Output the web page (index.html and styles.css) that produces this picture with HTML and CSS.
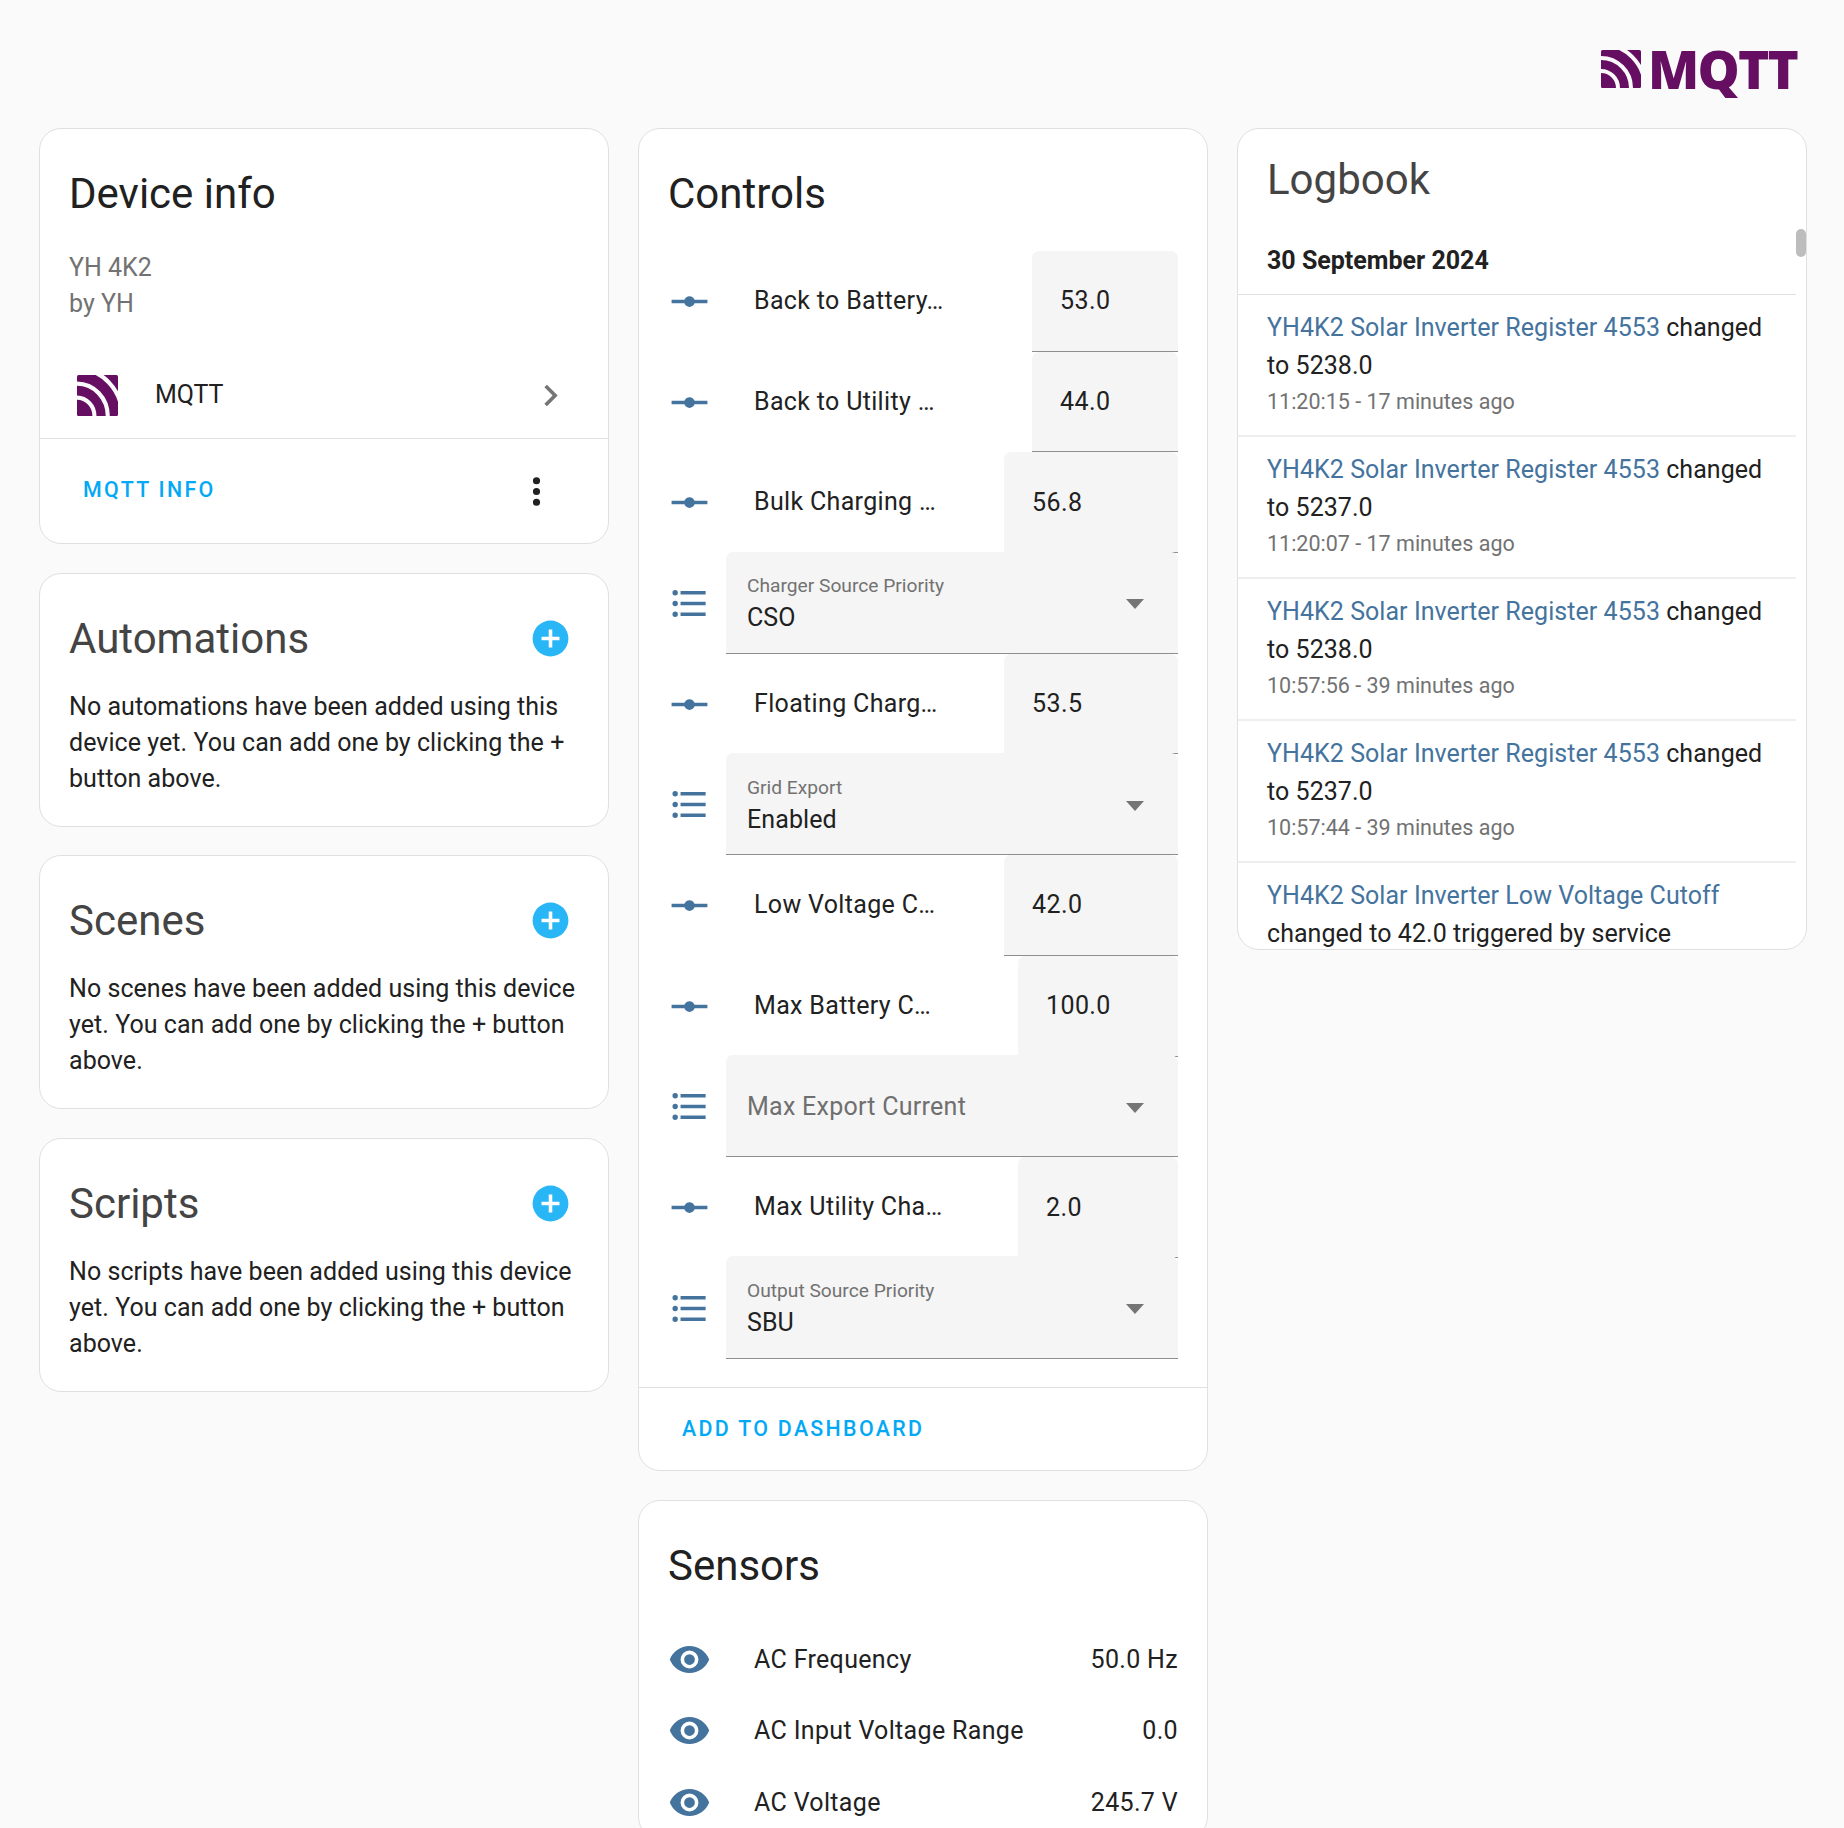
FILE: index.html
```html
<!DOCTYPE html>
<html>
<head>
  <meta charset="UTF-8">
  <title>YH 4K2</title>
  <link rel="stylesheet" href="styles.css">
</head>
<body>
  <svg class="defs" width="0" height="0">
    <symbol id="i-mqtt" viewBox="0 0 40 38" preserveAspectRatio="none">
      <rect width="40" height="38" rx="1.5" fill="#660f62"/>
      <g fill="none" stroke="#fafafa" stroke-width="4">
        <circle cx="0" cy="38" r="17"/>
        <circle cx="0" cy="38" r="30"/>
        <circle cx="0" cy="38" r="44"/>
      </g>
    </symbol>
    <symbol id="i-slider" viewBox="0 0 24 24"><path d="M2 11H9.17C9.58 9.83 10.69 9 12 9S14.42 9.83 14.83 11H22V13H14.83C14.42 14.17 13.31 15 12 15S9.58 14.17 9.17 13H2V11Z"/></symbol>
    <symbol id="i-list" viewBox="0 0 24 24"><path d="M7,5H21V7H7V5M7,13V11H21V13H7M4,4.5A1.5,1.5 0 0,1 5.5,6A1.5,1.5 0 0,1 4,7.5A1.5,1.5 0 0,1 2.5,6A1.5,1.5 0 0,1 4,4.5M4,10.5A1.5,1.5 0 0,1 5.5,12A1.5,1.5 0 0,1 4,13.5A1.5,1.5 0 0,1 2.5,12A1.5,1.5 0 0,1 4,10.5M7,19V17H21V19H7M4,16.5A1.5,1.5 0 0,1 5.5,18A1.5,1.5 0 0,1 4,19.5A1.5,1.5 0 0,1 2.5,18A1.5,1.5 0 0,1 4,16.5Z"/></symbol>
    <symbol id="i-eye" viewBox="0 0 24 24"><path d="M12,9A3,3 0 0,0 9,12A3,3 0 0,0 12,15A3,3 0 0,0 15,12A3,3 0 0,0 12,9M12,17A5,5 0 0,1 7,12A5,5 0 0,1 12,7A5,5 0 0,1 17,12A5,5 0 0,1 12,17M12,4.5C7,4.5 2.73,7.61 1,12C2.73,16.39 7,19.5 12,19.5C17,19.5 21.27,16.39 23,12C21.27,7.61 17,4.5 12,4.5Z"/></symbol>
    <symbol id="i-plus" viewBox="0 0 24 24"><path d="M17,13H13V17H11V13H7V11H11V7H13V11H17M12,2A10,10 0 0,0 2,12A10,10 0 0,0 12,22A10,10 0 0,0 22,12A10,10 0 0,0 12,2Z"/></symbol>
  </svg>

  <header class="topbar">
    <svg class="logo-icon"><use href="#i-mqtt"/></svg>
    <span class="logo-text">MQTT</span>
  </header>

  <main class="columns">
    <section class="column">
      <div class="card">
        <h2 class="card-title">Device info</h2>
        <div class="device-meta">YH 4K2<br>by YH</div>
        <div class="integration">
          <svg class="integration-icon"><use href="#i-mqtt"/></svg>
          <span class="integration-name">MQTT</span>
          <svg class="chevron" viewBox="0 0 24 24"><path d="M8.59,16.58L13.17,12L8.59,7.41L10,6L16,12L10,18L8.59,16.58Z"/></svg>
        </div>
        <div class="device-actions">
          <a class="action-link">MQTT INFO</a>
          <svg class="dots" viewBox="0 0 24 24"><path d="M12,16A2,2 0 0,1 14,18A2,2 0 0,1 12,20A2,2 0 0,1 10,18A2,2 0 0,1 12,16M12,10A2,2 0 0,1 14,12A2,2 0 0,1 12,14A2,2 0 0,1 10,12A2,2 0 0,1 12,10M12,4A2,2 0 0,1 14,6A2,2 0 0,1 12,8A2,2 0 0,1 10,6A2,2 0 0,1 12,4Z"/></svg>
        </div>
      </div>

      <div class="card">
        <div class="card-head">
          <h2 class="card-title muted">Automations</h2>
          <svg class="add-icon"><use href="#i-plus"/></svg>
        </div>
        <p class="empty-text">No automations have been added using this device yet. You can add one by clicking the + button above.</p>
      </div>

      <div class="card">
        <div class="card-head">
          <h2 class="card-title muted">Scenes</h2>
          <svg class="add-icon"><use href="#i-plus"/></svg>
        </div>
        <p class="empty-text">No scenes have been added using this device yet. You can add one by clicking the + button above.</p>
      </div>

      <div class="card">
        <div class="card-head">
          <h2 class="card-title muted">Scripts</h2>
          <svg class="add-icon"><use href="#i-plus"/></svg>
        </div>
        <p class="empty-text">No scripts have been added using this device yet. You can add one by clicking the + button above.</p>
      </div>
    </section>

    <section class="column">
      <div class="card">
        <h2 class="card-title">Controls</h2>
        <div class="controls">
          <div class="control">
            <svg class="entity-icon"><use href="#i-slider"/></svg>
            <span class="control-label">Back to Battery…</span>
            <div class="field field-s">53.0</div>
          </div>
          <div class="control">
            <svg class="entity-icon"><use href="#i-slider"/></svg>
            <span class="control-label">Back to Utility …</span>
            <div class="field field-s">44.0</div>
          </div>
          <div class="control">
            <svg class="entity-icon"><use href="#i-slider"/></svg>
            <span class="control-label">Bulk Charging …</span>
            <div class="field field-l">56.8</div>
          </div>
          <div class="control">
            <svg class="entity-icon"><use href="#i-list"/></svg>
            <div class="select">
              <div class="select-text">
                <span class="select-label">Charger Source Priority</span>
                <span class="select-value">CSO</span>
              </div>
              <span class="arrow"></span>
            </div>
          </div>
          <div class="control">
            <svg class="entity-icon"><use href="#i-slider"/></svg>
            <span class="control-label">Floating Charg…</span>
            <div class="field field-l">53.5</div>
          </div>
          <div class="control">
            <svg class="entity-icon"><use href="#i-list"/></svg>
            <div class="select">
              <div class="select-text">
                <span class="select-label">Grid Export</span>
                <span class="select-value">Enabled</span>
              </div>
              <span class="arrow"></span>
            </div>
          </div>
          <div class="control">
            <svg class="entity-icon"><use href="#i-slider"/></svg>
            <span class="control-label">Low Voltage C…</span>
            <div class="field field-l">42.0</div>
          </div>
          <div class="control">
            <svg class="entity-icon"><use href="#i-slider"/></svg>
            <span class="control-label">Max Battery C…</span>
            <div class="field field-m">100.0</div>
          </div>
          <div class="control">
            <svg class="entity-icon"><use href="#i-list"/></svg>
            <div class="select">
              <div class="select-text">
                <span class="select-placeholder">Max Export Current</span>
              </div>
              <span class="arrow"></span>
            </div>
          </div>
          <div class="control">
            <svg class="entity-icon"><use href="#i-slider"/></svg>
            <span class="control-label">Max Utility Cha…</span>
            <div class="field field-m">2.0</div>
          </div>
          <div class="control">
            <svg class="entity-icon"><use href="#i-list"/></svg>
            <div class="select">
              <div class="select-text">
                <span class="select-label">Output Source Priority</span>
                <span class="select-value">SBU</span>
              </div>
              <span class="arrow"></span>
            </div>
          </div>
        </div>
        <div class="card-actions">
          <a class="action-link">ADD TO DASHBOARD</a>
        </div>
      </div>

      <div class="card">
        <h2 class="card-title">Sensors</h2>
        <div class="sensors">
          <div class="sensor">
            <svg class="entity-icon"><use href="#i-eye"/></svg>
            <span class="sensor-name">AC Frequency</span>
            <span>50.0 Hz</span>
          </div>
          <div class="sensor">
            <svg class="entity-icon"><use href="#i-eye"/></svg>
            <span class="sensor-name">AC Input Voltage Range</span>
            <span>0.0</span>
          </div>
          <div class="sensor">
            <svg class="entity-icon"><use href="#i-eye"/></svg>
            <span class="sensor-name">AC Voltage</span>
            <span>245.7 V</span>
          </div>
        </div>
      </div>
    </section>

    <section class="column">
      <div class="card logbook">
        <h2 class="card-title muted">Logbook</h2>
        <div class="log-date">30 September 2024</div>
        <div class="log-entry">
          <p class="log-text"><a class="log-link">YH4K2 Solar Inverter Register 4553</a> changed to 5238.0</p>
          <div class="log-time">11:20:15 - 17 minutes ago</div>
        </div>
        <div class="log-entry">
          <p class="log-text"><a class="log-link">YH4K2 Solar Inverter Register 4553</a> changed to 5237.0</p>
          <div class="log-time">11:20:07 - 17 minutes ago</div>
        </div>
        <div class="log-entry">
          <p class="log-text"><a class="log-link">YH4K2 Solar Inverter Register 4553</a> changed to 5238.0</p>
          <div class="log-time">10:57:56 - 39 minutes ago</div>
        </div>
        <div class="log-entry">
          <p class="log-text"><a class="log-link">YH4K2 Solar Inverter Register 4553</a> changed to 5237.0</p>
          <div class="log-time">10:57:44 - 39 minutes ago</div>
        </div>
        <div class="log-entry">
          <p class="log-text"><a class="log-link">YH4K2 Solar Inverter Low Voltage Cutoff</a> changed to 42.0 triggered by service</p>
        </div>
        <div class="log-thumb"></div>
      </div>
    </section>
  </main>
</body>
</html>
```

FILE: styles.css
```css
html, body {
  height: 1828px;
  overflow: hidden;
}

body {
  margin: 0;
  background-color: #fafafa;
  color: #212121;
  font-family: Roboto, "Liberation Sans", sans-serif;
  font-size: 25px;
}

.defs {
  position: absolute;
}

.topbar {
  height: 128px;
  padding: 50px 47px 0 0;
  box-sizing: border-box;
  display: flex;
  justify-content: flex-end;
  align-items: flex-start;
  gap: 7px;
}

.logo-icon {
  width: 40px;
  height: 38px;
}

.logo-text {
  font-family: "Open Sans", sans-serif;
  font-weight: 800;
  font-size: 53px;
  line-height: 38px;
  letter-spacing: -1.8px;
  color: #660f62;
}

.columns {
  display: flex;
  gap: 29px;
  padding-left: 39px;
  align-items: flex-start;
}

.column {
  width: 570px;
  display: flex;
  flex-direction: column;
  gap: 28.5px;
}

.card {
  background-color: #fff;
  border: 1px solid #e0e0e0;
  border-radius: 22px;
  overflow: hidden;
}

.card-title {
  margin: 0;
  padding: 36px 29px 0;
  font-size: 42px;
  line-height: 58px;
  font-weight: 400;
}

.muted {
  color: #444;
}

.card-head {
  display: flex;
  justify-content: space-between;
  align-items: flex-end;
  padding-right: 36px;
}

.add-icon {
  width: 43px;
  height: 43px;
  margin-bottom: 8px;
  fill: #29b6f6;
}

.empty-text {
  margin: 0;
  padding: 21px 29px 29px;
  line-height: 36px;
  letter-spacing: 0.05px;
}

.device-meta {
  padding: 27px 29px 28px;
  line-height: 36px;
  color: #727272;
}

.integration {
  height: 88px;
  display: flex;
  align-items: center;
  padding: 0 36px 0 37px;
  border-bottom: 1px solid #e0e0e0;
}

.integration-icon {
  width: 41px;
  height: 41px;
  margin-top: 3px;
}

.integration-name {
  margin-left: 37px;
  flex: 1;
}

.chevron {
  width: 43px;
  height: 43px;
  margin-top: 2px;
  fill: #757575;
}

.device-actions {
  height: 104px;
  display: flex;
  align-items: center;
  justify-content: space-between;
  padding: 0 50px 4px 43px;
  box-sizing: border-box;
}

.action-link {
  color: #03a9f4;
  font-size: 21.4px;
  font-weight: 500;
  letter-spacing: 2.3px;
}

.dots {
  width: 43px;
  height: 43px;
  margin-top: 4px;
  fill: #212121;
}

.controls {
  padding: 28px 29px 28px 29px;
}

.control {
  height: 100.7px;
  display: flex;
  align-items: center;
}

.entity-icon {
  width: 43px;
  height: 43px;
  flex: none;
  fill: #44739e;
}

.control-label {
  flex: 1;
  margin-left: 43px;
  padding-bottom: 2px;
  white-space: nowrap;
  letter-spacing: 0.33px;
}

.field {
  height: 100%;
  box-sizing: border-box;
  display: flex;
  align-items: center;
  padding-left: 28px;
  background-color: #f5f5f5;
  border-bottom: 1px solid #8e8e8e;
  border-radius: 7px 7px 0 0;
  letter-spacing: 0.4px;
}

.field-s {
  width: 146px;
}

.field-m {
  width: 160px;
}

.field-l {
  width: 174px;
}

/* select sits over the underline of the row above, only the corner shows it */
.select {
  flex: 1;
  align-self: flex-end;
  height: calc(100% + 1.5px);
  margin-left: 15px;
  box-sizing: border-box;
  display: flex;
  align-items: center;
  justify-content: space-between;
  padding: 2px 33px 0 21px;
  background-color: #f5f5f5;
  border-bottom: 1px solid #8e8e8e;
  border-radius: 7px 7px 0 0;
}

.select-text {
  display: flex;
  flex-direction: column;
}

.select-label {
  font-size: 19.2px;
  line-height: 30px;
  color: #727272;
}

.select-value {
  line-height: 34px;
  letter-spacing: 0.1px;
}

.select-placeholder {
  color: #6f6f6f;
  letter-spacing: 0.26px;
}

.arrow {
  width: 0;
  height: 0;
  margin-top: 2px;
  margin-right: 1px;
  border-left: 9px solid transparent;
  border-right: 9px solid transparent;
  border-top: 10px solid #757575;
}

.card-actions {
  height: 82.5px;
  padding-left: 43px;
  display: flex;
  align-items: center;
  border-top: 1px solid #e0e0e0;
}

.sensors {
  padding: 29px 29px 0 29px;
  letter-spacing: 0.33px;
}

.sensor {
  height: 71.6px;
  display: flex;
  align-items: center;
}

.sensor-name {
  flex: 1;
  margin-left: 43px;
}

.logbook {
  position: relative;
  height: 822px;
  box-sizing: border-box;
}

.logbook .card-title {
  padding-top: 22px;
}

.log-date {
  margin-right: 10px;
  padding: 0 29px;
  height: 86px;
  line-height: 103px;
  box-sizing: border-box;
  font-weight: 700;
  border-bottom: 1px solid #e0e0e0;
}

.log-entry {
  margin-right: 10px;
  padding: 13.7px 20px 16.3px 29px;
  border-bottom: 2px solid #eee;
}

.log-text {
  margin: 0;
  line-height: 38px;
  letter-spacing: 0.05px;
}

.log-link {
  color: #44739e;
}

.log-time {
  font-size: 21.5px;
  line-height: 34px;
  color: #727272;
}

.log-thumb {
  position: absolute;
  top: 100px;
  right: 0;
  width: 10px;
  height: 28px;
  background-color: #bdbdbd;
  border-radius: 5px;
}
```
